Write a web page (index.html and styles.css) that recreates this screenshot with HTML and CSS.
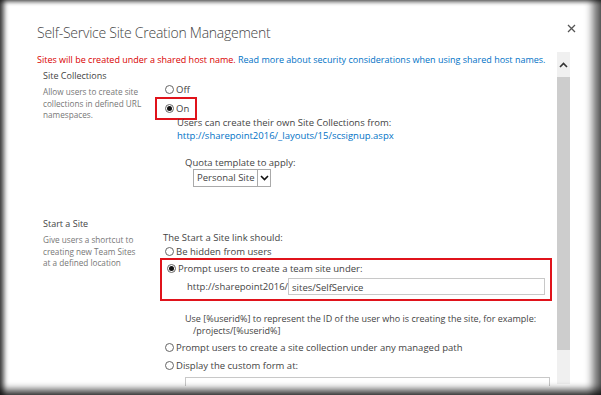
FILE: index.html
```html
<!DOCTYPE html>
<html lang="en">
<head>
    <meta charset="UTF-8">
    <title>Self-Service Site Creation Management</title>
    <link rel="stylesheet" href="styles.css">
</head>
<body>
    <div class="frame">
        <div class="dialog-head">
            <h1>Self-Service Site Creation Management</h1>
            <svg class="close" width="9" height="9" viewBox="0 0 9 9">
                <path d="M1 1L8 8M8 1L1 8" stroke="#555" stroke-width="1.3"/>
            </svg>
        </div>
        <div class="dialog-body">
            <div class="content">
                <p class="notice">
                    <span class="warn">Sites will be created under a shared host name.</span>
                    <a href="#">Read more about security considerations when using shared host names.</a>
                </p>

                <div class="section section-first">
                    <div class="section-info">
                        <h3>Site Collections</h3>
                        <p>Allow users to create site collections in defined URL namespaces.</p>
                    </div>
                    <div class="section-fields">
                        <div class="radio"><span class="dot"></span>Off</div>
                        <div class="radio checked highlight-on"><span class="dot"></span>On</div>
                        <div class="indent">
                            <p>Users can create their own Site Collections from:</p>
                            <a href="#">http://sharepoint2016/_layouts/15/scsignup.aspx</a>
                            <div class="quota">
                                <p>Quota template to apply:</p>
                                <div class="select">
                                    <span>Personal Site</span>
                                    <span class="select-arrow">
                                        <svg width="9" height="6" viewBox="0 0 9 6">
                                            <path d="M1 1L4.5 4.5L8 1" fill="none" stroke="#111" stroke-width="1.6"/>
                                        </svg>
                                    </span>
                                </div>
                            </div>
                        </div>
                    </div>
                </div>

                <div class="section section-start">
                    <div class="section-info">
                        <h3>Start a Site</h3>
                        <p>Give users a shortcut to creating new Team Sites at a defined location</p>
                    </div>
                    <div class="section-fields">
                        <p class="lead">The Start a Site link should:</p>
                        <div class="radio hidden-opt"><span class="dot"></span>Be hidden from users</div>
                        <div class="highlight-box">
                            <div class="radio checked"><span class="dot"></span>Prompt users to create a team site under:</div>
                            <div class="url-row">
                                <span>http://sharepoint2016/</span>
                                <div class="text-input">sites/SelfService</div>
                            </div>
                        </div>
                        <p class="hint">Use [%userid%] to represent the ID of the user who is creating the site, for example:</p>
                        <p class="hint-path">/projects/[%userid%]</p>
                        <div class="radio"><span class="dot"></span>Prompt users to create a site collection under any managed path</div>
                        <div class="radio"><span class="dot"></span>Display the custom form at:</div>
                        <div class="text-input wide"></div>
                    </div>
                </div>
            </div>
            <div class="scrollbar">
                <div class="scroll-up">
                    <svg width="9" height="6" viewBox="0 0 9 6">
                        <path d="M1 5L4.5 1.5L8 5" fill="none" stroke="#333" stroke-width="1.6"/>
                    </svg>
                </div>
                <div class="scroll-thumb"></div>
            </div>
        </div>
    </div>
</body>
</html>
```

FILE: styles.css
```css
body {
    margin: 0;
    font-family: 'Open Sans', 'Noto Sans', sans-serif;
    font-size: 9.5px;
    color: #444;
}
.frame {
    position: relative;
    width: 601px;
    height: 395px;
    background: #fff;
    overflow: hidden;
}
.frame::after {
    content: "";
    position: absolute;
    inset: 0;
    pointer-events: none;
    box-shadow: inset 5px 0 5px -1px rgba(0, 0, 0, 0.7),
                inset -12px 0 8px -4px rgba(0, 0, 0, 0.6),
                inset 0 -9px 7px -3px rgba(0, 0, 0, 0.65),
                inset 0 4px 4px -2px rgba(0, 0, 0, 0.45);
}
.dialog-head {
    display: flex;
    justify-content: space-between;
    align-items: flex-start;
    padding: 22px 25px 0 37px;
    height: 30px;
}
h1 {
    margin: 0;
    font-size: 14px;
    font-weight: 300;
    letter-spacing: -0.25px;
    line-height: 22px;
    color: #444;
}
.close {
    margin-top: 2px;
}
.dialog-body {
    display: flex;
    height: 334px;
    overflow: hidden;
}
.content {
    width: 513px;
    padding-left: 37px;
}
.notice {
    margin: 1px 0 0;
    font-size: 9px;
    line-height: 13px;
    white-space: nowrap;
}
.warn {
    color: #d90000;
}
a {
    color: #0072c6;
    text-decoration: none;
}
.section {
    display: grid;
    grid-template-columns: 120px 1fr;
    padding-left: 6px;
    margin-top: 30px;
}
.section-first {
    margin-top: 3px;
}
.section-info h3 {
    margin: 0;
    font-size: 9px;
    font-weight: 400;
    line-height: 14px;
    color: #444;
}
.section-info p {
    margin: 3px 0 0;
    width: 102px;
    font-size: 8.2px;
    line-height: 11.5px;
    color: #777;
}
.section-fields {
    padding-top: 14px;
}
.section-fields p {
    margin: 0;
}
.lead {
    line-height: 13px;
    margin-bottom: 1px !important;
}
.radio {
    display: flex;
    align-items: center;
    line-height: 13px;
    padding-left: 2px;
    margin-bottom: 5px;
}
.dot {
    width: 9px;
    height: 9px;
    border: 1px solid #666;
    border-radius: 50%;
    margin-right: 2px;
    box-sizing: border-box;
    display: flex;
    align-items: center;
    justify-content: center;
    background: #fff;
}
.checked .dot::after {
    content: "";
    width: 5px;
    height: 5px;
    border-radius: 50%;
    background: #111;
}
.highlight-on {
    display: inline-flex;
    border: 2px solid #e0131b;
    padding: 3px 6px 3px 8px;
    margin: -5px 0 -4px -8px;
}
.indent {
    padding-left: 14px;
    line-height: 13px;
}
.indent a {
    display: block;
}
.quota {
    padding: 14px 0 0 8px;
}
.select {
    display: inline-flex;
    align-items: stretch;
    margin-left: 8px;
    border: 1px solid #aaa;
    height: 16px;
    line-height: 16px;
}
.select span:first-child {
    padding: 0 3px;
}
.select-arrow {
    display: flex;
    align-items: center;
    justify-content: center;
    width: 12px;
    border-left: 1px solid #aaa;
}
.hidden-opt {
    margin-bottom: 0;
}
.highlight-box {
    border: 2px solid #e0131b;
    margin-left: -3px;
    width: 385px;
    padding: 2px 0 4px 3px;
}
.highlight-box .radio {
    margin-bottom: 3px;
}
.url-row {
    display: flex;
    align-items: center;
    padding-left: 22px;
}
.text-input {
    flex: 1;
    height: 17px;
    line-height: 17px;
    border: 1px solid #c8c8c8;
    padding-left: 3px;
    margin-right: 5px;
    box-sizing: border-box;
}
.section-fields .hint {
    margin-top: 12px;
    padding-left: 22px;
    font-size: 9px;
    line-height: 12px;
    white-space: nowrap;
}
.section-fields .hint-path {
    margin: 0 0 4px;
    padding-left: 30px;
    font-size: 9px;
    line-height: 12px;
}
.text-input.wide {
    margin-left: 22px;
    width: 365px;
    height: 24px;
    margin-top: 2px;
}
.scrollbar {
    width: 13px;
    margin-left: 7px;
    display: flex;
    flex-direction: column;
    height: 332px;
    background: #f0f0f0;
}
.scroll-up {
    height: 25px;
    display: flex;
    align-items: center;
    justify-content: center;
}
.scroll-thumb {
    height: 273px;
    background: #cdcdcd;
}
```
